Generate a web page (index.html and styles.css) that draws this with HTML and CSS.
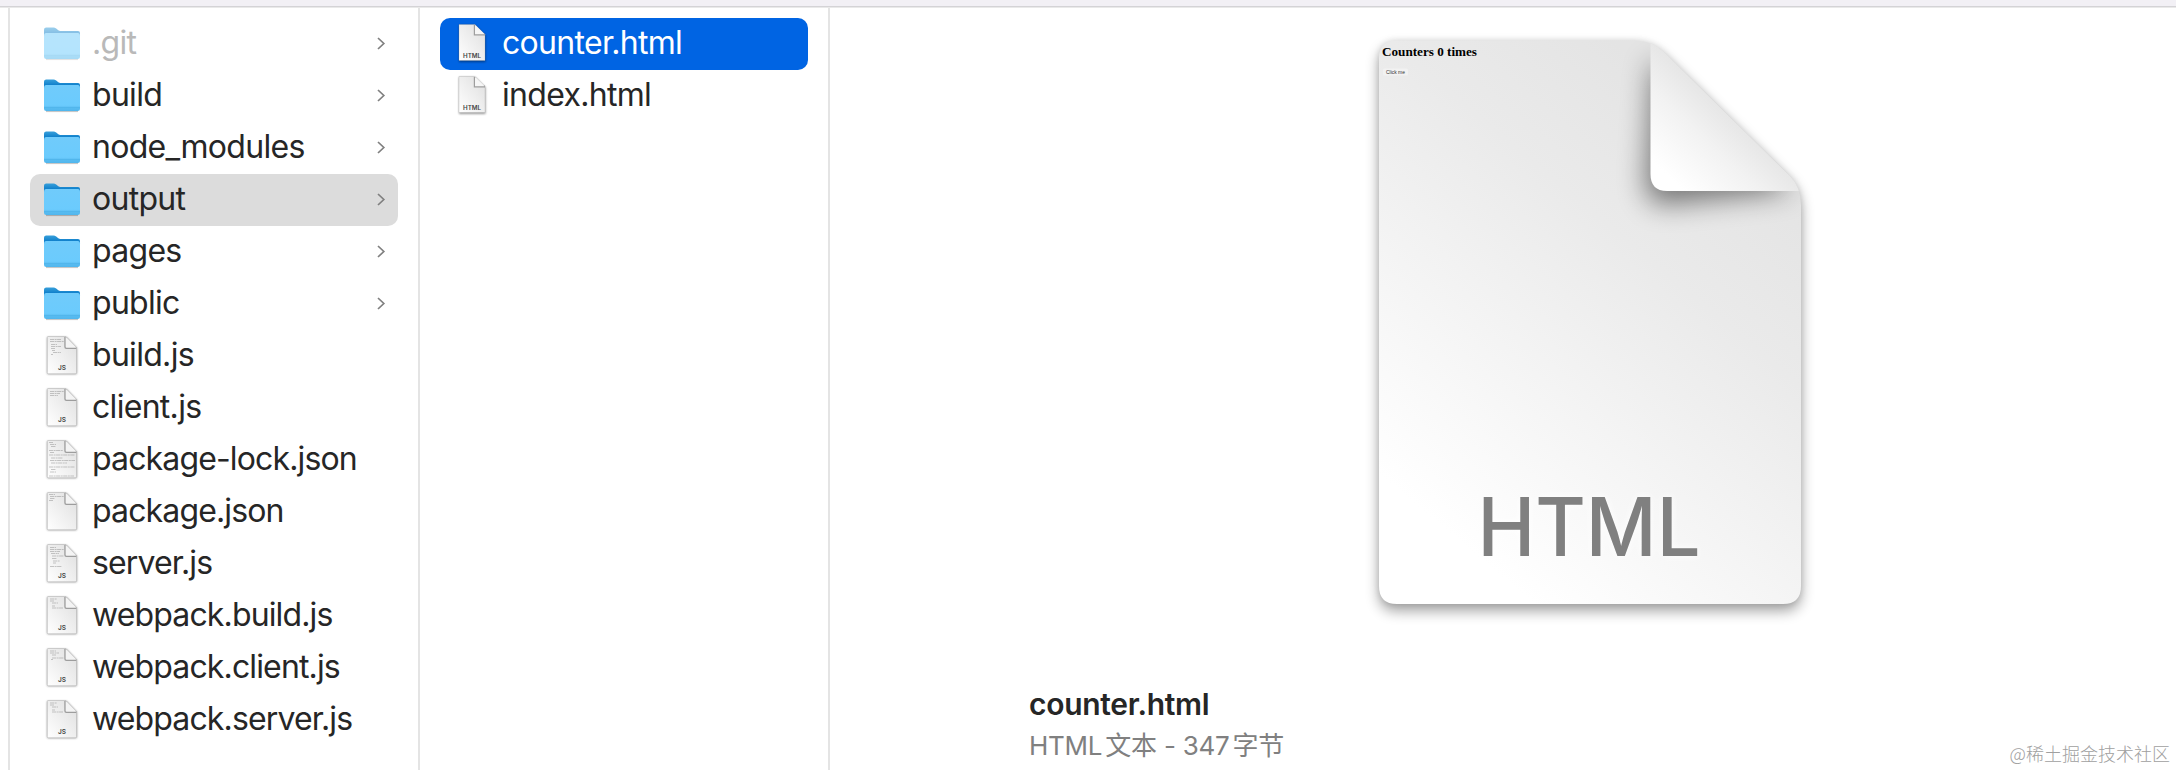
FILE: index.html
```html
<!DOCTYPE html>
<html lang="zh-CN">
<head>
<meta charset="utf-8">
<title>output</title>
<link rel="stylesheet" href="styles.css">
</head>
<body>
<svg class="defs" width="0" height="0" aria-hidden="true">
  <defs>
    <linearGradient id="front" x1="0" y1="0" x2="0" y2="1"><stop offset="0" stop-color="#70cbfb"/><stop offset=".78" stop-color="#6bcbfd"/><stop offset=".85" stop-color="#5fc0f4"/><stop offset="1" stop-color="#4fb5ec"/></linearGradient>
    <linearGradient id="tab" gradientUnits="userSpaceOnUse" x1="0" y1="3" x2="0" y2="9"><stop offset="0" stop-color="#3ba2dc"/><stop offset="1" stop-color="#1080cb"/></linearGradient>
    <linearGradient id="paper" x1="1" y1="0" x2="0" y2="1"><stop offset="0" stop-color="#dedede"/><stop offset=".45" stop-color="#ededed"/><stop offset="1" stop-color="#fff"/></linearGradient>
    <symbol id="folder" viewBox="0 0 40 40">
      <path d="M4 35.300H36" stroke="#000" stroke-opacity=".22" stroke-width="1.600"/>
      <path d="M2 28V5.700Q2 3.500 4.200 3.500H11.500Q13 3.500 14.200 4.500L16.300 6.300Q17.200 7 18.500 7H36Q38 7 38 9V28Z" fill="url(#tab)"/>
      <path d="M2 12Q2 9.200 3.800 9H36.200Q38 9.200 38 11.500V32.500Q38 35 35.500 35H4.500Q2 35 2 32.500Z" fill="url(#front)"/>
      <path d="M2 31.700H38" stroke="#42a9e3" stroke-opacity=".5"/>
    </symbol>
    <symbol id="page" viewBox="0 0 40 44">
      <path d="M6 3H24.500L35 14V39Q35 40.300 33.700 40.300H6.200Q5 40.300 5 39V4Q5 3 6 3Z" fill="#000" opacity=".35" filter="url(#soft)"/>
      <path d="M6 2.500H24L34.600 13.500V38.500Q34.600 39.800 33.500 39.800H6.500Q5.300 39.800 5.300 38.500V3.500Q5.300 2.500 6 2.500Z" fill="url(#paper)" stroke="#999" stroke-opacity=".5" stroke-width=".7"/>
      <path d="M23.300 3V13Q23.300 14 24.300 14H34.300" fill="none" stroke="#777" stroke-opacity=".65" stroke-width="2" filter="url(#hair)"/>
      <path d="M23.600 3L34.300 13.800H24.600Q23.600 13.800 23.600 12.800Z" fill="#f4f4f4"/>
    </symbol>
    <symbol id="hpage" viewBox="0 0 40 44">
      <path d="M7 3H23L33.500 13.500V40H7Z" fill="#000" opacity=".4" filter="url(#soft)"/>
      <path d="M7 2.500H23L33 12.500V38.500H7Z" fill="url(#paper)" stroke="#999" stroke-opacity=".4" stroke-width=".6"/>
      <path d="M22.700 3V12.500H33" fill="none" stroke="#777" stroke-opacity=".65" stroke-width="1.800" filter="url(#hair)"/>
      <path d="M23 3L32.700 12.300H23Z" fill="#f6f6f6"/>
      <text x="20" y="35.700" class="tag" textLength="18" lengthAdjust="spacingAndGlyphs">HTML</text>
    </symbol>
    <filter id="soft" x="-20%" y="-20%" width="140%" height="140%"><feGaussianBlur stdDeviation=".9"/></filter>
    <filter id="hair" x="-20%" y="-20%" width="140%" height="140%"><feGaussianBlur stdDeviation=".6"/></filter>
    <symbol id="chevron" viewBox="0 0 10 16"><path d="M2 2L7.800 7.500L2 13" fill="none" stroke="#808080" stroke-width="1.700"/></symbol>
  </defs>
</svg>
<div class="window">
  <div class="topbar"></div>
  <main class="browser">
    <div class="gutter"></div>
    <ul class="column">
      <li class="row hidden"><svg class="icon folder"><use href="#folder"/></svg><span class="name">.git</span><svg class="chev"><use href="#chevron"/></svg></li>
      <li class="row"><svg class="icon folder"><use href="#folder"/></svg><span class="name">build</span><svg class="chev"><use href="#chevron"/></svg></li>
      <li class="row"><svg class="icon folder"><use href="#folder"/></svg><span class="name">node_modules</span><svg class="chev"><use href="#chevron"/></svg></li>
      <li class="row open"><svg class="icon folder"><use href="#folder"/></svg><span class="name">output</span><svg class="chev"><use href="#chevron"/></svg></li>
      <li class="row"><svg class="icon folder"><use href="#folder"/></svg><span class="name">pages</span><svg class="chev"><use href="#chevron"/></svg></li>
      <li class="row"><svg class="icon folder"><use href="#folder"/></svg><span class="name">public</span><svg class="chev"><use href="#chevron"/></svg></li>
      <li class="row"><svg class="icon" viewBox="0 0 40 44"><use href="#page"/><path class="code" d="M8 5.500h11M8 7.500h14M9 10.500h6M9 12.500h10M9 14.500h4M10 16.500h3M11 18.500h8M9 20.500h2"/><text x="20" y="36" class="tag js">JS</text></svg><span class="name">build.js</span></li>
      <li class="row"><svg class="icon" viewBox="0 0 40 44"><use href="#page"/><path class="code" d="M8 5.500h14M8 7.500h10M8 9.500h8"/><text x="20" y="36" class="tag js">JS</text></svg><span class="name">client.js</span></li>
      <li class="row"><svg class="icon" viewBox="0 0 40 44"><use href="#page"/><path class="code" d="M7 4.500h4M8 6.500h6M9 8.500h5M7 12.500h14M8 14.500h4M7 17h26M9 20h12M8 22.500h25M9 25h16M7 29h26M9 31.500h5M8 34h6M7 38h25"/></svg><span class="name tight">package-lock.json</span></li>
      <li class="row"><svg class="icon" viewBox="0 0 40 44"><use href="#page"/><path class="code" d="M7 4.500h6M8 6.500h14M8 8.500h5M7 10.500h4"/></svg><span class="name tight">package.json</span></li>
      <li class="row"><svg class="icon" viewBox="0 0 40 44"><use href="#page"/><path class="code" d="M8 5.500h6M8 7.500h14M8 9.500h10M9 11.500h8M10 14h12M10 16.500h5M11 19h7M11 21h3M8 24.500h12"/><text x="20" y="36" class="tag js">JS</text></svg><span class="name tight">server.js</span></li>
      <li class="row"><svg class="icon" viewBox="0 0 40 44"><use href="#page"/><path class="code" d="M8 5h7M8 7h4M10 9h6M10 12h3M10 14h11"/><text x="20" y="36" class="tag js">JS</text></svg><span class="name tight">webpack.build.js</span></li>
      <li class="row"><svg class="icon" viewBox="0 0 40 44"><use href="#page"/><path class="code" d="M8 5h6M8 7h9M10 9h4M10 12h12M9 13.500h2"/><text x="20" y="36" class="tag js">JS</text></svg><span class="name tight">webpack.client.js</span></li>
      <li class="row"><svg class="icon" viewBox="0 0 40 44"><use href="#page"/><path class="code" d="M8 5h7M8 7h4M10 9h6M10 12h3M10 14h11"/><text x="20" y="36" class="tag js">JS</text></svg><span class="name tight">webpack.server.js</span></li>
    </ul>
    <ul class="column">
      <li class="row selected"><svg class="icon"><use href="#hpage"/></svg><span class="name">counter.html</span></li>
      <li class="row"><svg class="icon"><use href="#hpage"/></svg><span class="name">index.html</span></li>
    </ul>
    <section class="preview">
      <svg class="document" width="482" height="630" viewBox="1350 8 482 630">
        <defs>
          <linearGradient id="sheet" gradientUnits="userSpaceOnUse" x1="1720" y1="130" x2="1410" y2="500"><stop offset="0" stop-color="#e4e4e4"/><stop offset=".3" stop-color="#eaeaea"/><stop offset="1" stop-color="#fff"/></linearGradient>
          <linearGradient id="curl" gradientUnits="userSpaceOnUse" x1="1740" y1="100" x2="1668" y2="176"><stop offset="0" stop-color="#e0e0e0"/><stop offset=".5" stop-color="#f2f2f2"/><stop offset="1" stop-color="#fff"/></linearGradient>
          <filter id="b1" x="-20%" y="-20%" width="140%" height="140%"><feGaussianBlur stdDeviation="7"/></filter>
          <filter id="b2" x="-40%" y="-40%" width="180%" height="180%"><feGaussianBlur stdDeviation="14"/></filter>
          <filter id="b3" x="-20%" y="-20%" width="140%" height="140%"><feGaussianBlur stdDeviation="3"/></filter>
          <path id="outline" d="M1397 40.500H1637Q1652 41 1664 52L1790 176Q1801 187 1801 206V586Q1801 604 1783 604H1397Q1379 604 1379 586V58Q1379 40.500 1397 40.500Z"/>
          <clipPath id="cut"><use href="#outline"/></clipPath>
        </defs>
        <use href="#outline" transform="translate(0 7)" opacity=".36" filter="url(#b1)"/>
        <use href="#outline" opacity=".1" filter="url(#b3)"/>
        <use href="#outline" fill="url(#sheet)"/>
        <g clip-path="url(#cut)">
          <path d="M1653 58L1646 184Q1646 204 1666 204L1792 190L1730 130Z" opacity=".5" filter="url(#b2)"/>
          <path d="M1650.500 30V174Q1650.500 191 1667 191H1820V30Z" fill="url(#curl)"/>
        </g>
        <text x="1382" y="56" class="page-title" textLength="95" lengthAdjust="spacingAndGlyphs">Counters 0 times</text>
        <rect x="1383" y="68.500" width="25" height="7" rx="1.500" fill="#f2f2f2"/>
        <text x="1386" y="74" class="page-button" textLength="19" lengthAdjust="spacingAndGlyphs">Click me</text>
        <text x="1477.500" y="555.500" class="kind" textLength="223" lengthAdjust="spacingAndGlyphs">HTML</text>
      </svg>
      <div class="info">
        <div class="title">counter.html</div>
        <div class="meta">HTML<span class="cjk">文本</span> - 347<span class="cjk">字节</span></div>
      </div>
      <div class="watermark">@稀土掘金技术社区</div>
    </section>
  </main>
</div>
</body>
</html>
```
FILE: styles.css
```css
* { box-sizing: border-box; }
body { margin: 0; background: #fff; color: #262626; font-family: Inter, "Noto Sans CJK SC", sans-serif; }
.defs { position: absolute; }
.window { width: 2176px; height: 770px; display: flex; flex-direction: column; overflow: hidden; }
.topbar { height: 7px; margin-bottom: 1px; flex: none; background: #f2f0f5; border-bottom: 1px solid #d4d3d6; box-shadow: 0 1px #e9e9e9; }
.browser { flex: 1; min-height: 0; display: grid; grid-template-columns: 10px 410px 410px 1fr; }
.gutter { border-right: 2px solid #e4e4e4; }
.column { list-style: none; margin: 0; padding: 10px 20px 0; border-right: 2px solid #e4e4e4; }
.row { height: 52px; display: flex; align-items: center; border-radius: 10px; padding: 0 12px; }
.icon { width: 40px; height: 44px; flex: none; }
.icon.folder { height: 40px; }
.name { flex: 1; margin-left: 10px; font-size: 32px; line-height: 48px; padding-bottom: 2px; letter-spacing: -0.7px; white-space: nowrap; }
.name.tight { letter-spacing: -0.86px; }
.chev { width: 10px; height: 16px; flex: none; }
.hidden .name { color: #b9b9b9; }
.hidden .folder { opacity: .5; }
.open { background: #dcdcdc; }
.selected { background: #0064e3; color: #fff; }
.tag { font: 600 5.500px Inter, sans-serif; fill: #444; text-anchor: middle; }
.tag.js { font-size: 6.500px; }
.code { fill: none; stroke: #888; stroke-opacity: .5; stroke-width: .9; stroke-dasharray: 4 .6 2 .5; }
.preview { position: relative; display: flex; flex-direction: column; }
.document { margin-left: 520px; flex: none; }
.page-title { font: 700 13.500px "Liberation Serif", serif; fill: #000; }
.page-button { font: 5px "Liberation Sans", sans-serif; fill: #333; }
.kind { font: 500 81px Inter, sans-serif; fill: #808080; filter: drop-shadow(0 0 4px #fff); }
.info { margin: 46px 0 0 199px; }
.title { font-size: 30px; font-weight: 600; line-height: 40px; letter-spacing: -0.3px; }
.meta { font-size: 26px; line-height: 40px; color: #808080; white-space: nowrap; letter-spacing: -0.25px; }
.cjk { font-family: "Noto Sans CJK SC", sans-serif; margin-left: 3px; }
.watermark { position: absolute; right: 6px; bottom: 4px; font: 300 18px/26px "Noto Sans CJK SC", sans-serif; color: #a0a0a0; }
```
